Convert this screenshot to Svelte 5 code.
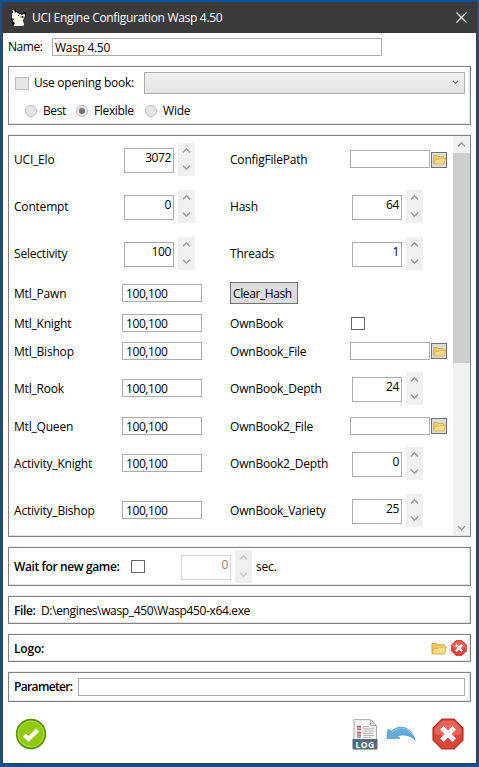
<script>
  const rows = [
    { h: 47, left: ['UCI_Elo', 'spin', '3072'], right: ['ConfigFilePath', 'file'] },
    { h: 47, left: ['Contempt', 'spin', '0'], right: ['Hash', 'spin', '64'] },
    { h: 47, left: ['Selectivity', 'spin', '100'], right: ['Threads', 'spin', '1'] },
    { h: 32, left: ['Mtl_Pawn', 'text', '100,100'], right: ['Clear_Hash', 'button'] },
    { h: 28, left: ['Mtl_Knight', 'text', '100,100'], right: ['OwnBook', 'check'] },
    { h: 28, left: ['Mtl_Bishop', 'text', '100,100'], right: ['OwnBook_File', 'file'] },
    { h: 47, left: ['Mtl_Rook', 'text', '100,100'], right: ['OwnBook_Depth', 'spin', '24'] },
    { h: 28, left: ['Mtl_Queen', 'text', '100,100'], right: ['OwnBook2_File', 'file'] },
    { h: 47, left: ['Activity_Knight', 'text', '100,100'], right: ['OwnBook2_Depth', 'spin', '0'] },
    { h: 47, left: ['Activity_Bishop', 'text', '100,100'], right: ['OwnBook_Variety', 'spin', '25'] }
  ];
</script>

{#snippet folder()}
  <svg class="folder" width="16" height="13" viewBox="0 0 16 13">
    <path d="M1 11.5V1.5h4.5l1 1.3H13v3" fill="#f2cb62" stroke="#d9a440" />
    <path d="M7.5 4h5v2h-5z" fill="#fff3c9" />
    <path d="M1 12 3 6.3h4.3L8.5 5H15.5l-2 7z" fill="#fbdc83" stroke="#dba744" stroke-width=".9" />
  </svg>
{/snippet}

{#snippet stop(size)}
  <svg width={size} height={size} viewBox="0 0 32 32">
    <path d="M10 1.2h12L30.8 10v12L22 30.8H10L1.2 22V10z" fill="#dc4638" stroke="#bd3429" stroke-width="1.6" />
    <path d="M10.6 2.8h10.8l7.8 7.8v5.2c-7 2-19 2-26.4 0v-5.2z" fill="#ed7464" opacity=".65" />
    <path d="m11.500 11.500 9 9m0-9-9 9" stroke="#fff" stroke-width="4.800" stroke-linecap="square" />
  </svg>
{/snippet}

{#snippet spinner(value)}
  <div class="spin">
    <div class="num">{value}</div>
    <div class="arrows">
      <svg width="17" height="33" viewBox="0 0 17 33" fill="none" stroke="#a0a0a0" stroke-width="1.6">
        <path d="m5 9.4 3.5-3.6L12 9.4M5 22.6l3.5 3.6 3.5-3.6" />
      </svg>
    </div>
  </div>
{/snippet}

{#snippet control(kind, value)}
  {#if kind === 'spin'}
    {@render spinner(value)}
  {:else if kind === 'text'}
    <div class="field short">{value}</div>
  {:else if kind === 'file'}
    <div class="field short"></div>
    <div class="browse">{@render folder()}</div>
  {:else if kind === 'check'}
    <div class="check"></div>
  {/if}
{/snippet}

<div class="window">
  <header>
    <svg class="logo" width="16" height="17" viewBox="0 0 16 17">
      <path d="M1 4V2l2-1 1 3 2-1 2 2 3 1 2-1 1 1-1 3-1 2 1 5-1 1H3l1-3-2-2 1-2-2-1z" fill="#fff" />
      <path d="M1 2h1v2H1zm3-2h1v3H4zm2 3h2v1H6zm2 1h2v1H8zm3 0h2v1h-2zm2-1h2v1h-2zm1 1h1v3h-1zM0 8h1v3H0zm1 3h1v1H1zm0 2h2v3H1zm11-2h1v1h-1zM7 6h1v1H7z" fill="#050505" />
      <path d="M9 7h4v2H9z" fill="#b7bd43" /><path d="M11 7h1v2h-1z" fill="#111" />
    </svg>
    <span class="title">UCI Engine Configuration Wasp 4.50</span>
    <svg class="close" width="11" height="11" viewBox="0 0 11 11" stroke="#fff" stroke-width="1.1"><path d="m.5.5 10 10m0-10-10 10" /></svg>
  </header>
  <main>
    <div class="name"><span>Name:</span><div class="field">Wasp 4.50</div></div>

    <section class="book">
      <div class="line">
        <div class="check off"></div>
        <span>Use opening book:</span>
        <div class="combo"><svg width="7" height="5" viewBox="0 0 7 5" fill="none" stroke="#666" stroke-width="1.2"><path d="m1 .8 2.5 2.5L6 .8" /></svg></div>
      </div>
      <div class="radios">
        <label class="best"><i></i>Best</label>
        <label class="flexible"><i class="on"></i>Flexible</label>
        <label class="wide"><i></i>Wide</label>
      </div>
    </section>

    <section class="options">
      <div class="rows">
        {#each rows as row}
          <div class="row" class:tall={row.h === 47} style:height="{row.h}px">
            <span class="lab">{row.left[0]}</span>
            <div class="cell" class:inset={row.left[1] === 'spin'}>{@render control(row.left[1], row.left[2])}</div>
            {#if row.right[1] === 'button'}
              <div class="btn">{row.right[0]}</div>
            {:else}
              <span class="lab">{row.right[0]}</span>
            {/if}
            <div class="cell" class:inset={row.right[1] === 'spin'}>{@render control(row.right[1], row.right[2])}</div>
          </div>
        {/each}
      </div>
      <div class="scroll">
        <svg width="17" height="17" viewBox="0 0 17 17" fill="none" stroke="#999" stroke-width="1.4"><path d="m5 10.5 3.5-3.7 3.5 3.7" /></svg>
        <div class="thumb"></div>
        <svg width="17" height="17" viewBox="0 0 17 17" fill="none" stroke="#999" stroke-width="1.4"><path d="m5 8 3.5 3.7L12 8" /></svg>
      </div>
    </section>

    <section class="wait">
      <b>Wait for new game:</b>
      <div class="check"></div>
      <div class="disabled">{@render spinner('0')}</div>
      <span class="sec">sec.</span>
    </section>

    <section class="file"><b>File:</b><span class="path">D:\engines\wasp_450\Wasp450-x64.exe</span></section>

    <section class="logobar"><b>Logo:</b><div class="tools">{@render folder()}{@render stop(16)}</div></section>

    <section class="param"><b>Parameter:</b><div class="field"></div></section>

    <footer>
      <svg width="32" height="32" viewBox="0 0 32 32">
        <ellipse cx="16" cy="17.5" rx="14.5" ry="14.3" fill="#000" opacity=".16" />
        <circle cx="16" cy="16" r="14.4" fill="#8fca0b" stroke="#569410" stroke-width="1.6" />
        <circle cx="16" cy="16" r="12.9" fill="none" stroke="#b0dd4a" stroke-width="1" />
        <path d="m9.3 17 4.2 4 9.2-9" fill="none" stroke="#fff" stroke-width="4.4" />
      </svg>
      <div class="right">
        <svg class="log" width="26" height="31" viewBox="0 0 26 31">
          <path d="M2 .6h16.500l6 6V21H2z" fill="#f7f7f7" stroke="#aaa" />
          <path d="M18.500.6v6h6z" fill="#ddd" stroke="#aaa" />
          <path d="M5 7.5h4M5 13.5h4" stroke="#e0503e" stroke-width="1.4" />
          <path d="M5 10.5h4M5 16.5h4" stroke="#e66e55" stroke-width="1.4" />
          <path d="M5 9h4M5 15h4M5 18h4" stroke="#4296d5" stroke-width="1.2" />
          <path d="M11 7.5h6m-6 1.8h11m-11 1.8h10m-10 1.8h11m-11 1.8h10m-10 1.8h11m-11 1.8h9" stroke="#b6b6b6" stroke-width=".9" />
          <path d="M.5 20h25v9.500q0 1-1 1h-23q-1 0-1-1z" fill="#576a7d" />
          <text x="13" y="28.7" text-anchor="middle" fill="#fff">LOG</text>
        </svg>
        <svg class="undo" width="30" height="17" viewBox="0 0 30 17">
          <path d="M1 12.500 2 3.200 5.200 5.300C12-1.500 25-.8 29 14.200 24 8.500 16.500 8 10.800 9.900L14 12.200Z" fill="#68abd8" stroke="#4a93c6" stroke-width=".8" stroke-linejoin="round" />
          <path d="M6 6.200C12.500.3 21.500 1 26 8" fill="none" stroke="#91c8e8" stroke-width="1.1" />
        </svg>
        {@render stop(32)}
      </div>
    </footer>
  </main>
</div>

<style>
  :global(body) { background: #fff; }
  .window {
    box-sizing: border-box; width: 479px; height: 767px; background: #fff;
    border: 2px solid #00559b; border-bottom-width: 3px;
    font: 12px/16px "Open Sans", "Noto Sans", sans-serif; color: #000; letter-spacing: -0.2px; white-space: nowrap;
  }
  .window *, .window { box-sizing: border-box; }
  svg { display: block; flex: none; }
  header { height: 31px; background: #3b3b3b; color: #fff; display: flex; align-items: center; padding: 0 10px 0 9px; }
  .logo { margin-top: -1px; }
  .title { margin-left: 5px; letter-spacing: -0.31px; }
  .close { margin-left: auto; }
  main { height: 731px; border: solid #3b3b3b; border-width: 0 1px 1px; padding: 5px 4px 0 5px; display: flex; flex-direction: column; }
  .field { height: 18px; border: 1px solid #abadb3; background: #fff; padding-left: 3px; line-height: 17px; letter-spacing: -0.42px; }
  .name { display: flex; height: 18px; line-height: 17px; }
  .name span { width: 44px; letter-spacing: -0.45px; }
  .name .field { width: 330px; padding-left: 2px; letter-spacing: -0.3px; }
  section { flex: none; width: 463px; border: 1px solid #828282; box-shadow: inset -1px -1px #e3e3e3, 0 -1px #efefef; }
  .check { width: 14px; height: 13px; border: 1px solid #666; background: #fff; flex: none; }
  .check.off { border-color: #bcbcbc; background: #e6e6e6; }
  .book { height: 59px; margin-top: 10px; padding: 5px 5px 0 6px; }
  .line { display: flex; align-items: center; height: 22px; }
  .line span { margin-left: 5px; width: 110px; flex: none; letter-spacing: -0.25px; }
  .combo { flex: 1; height: 22px; border: 1px solid #acacac; background: linear-gradient(#f0f0f0, #e4e4e4); display: flex; justify-content: flex-end; align-items: center; padding-right: 5px; }
  .combo svg { margin-top: -2px; }
  .radios { display: flex; margin: 10px 0 0 10px; height: 16px; line-height: 18px; }
  .radios label { display: flex; align-items: center; height: 14px; }
  .radios i { width: 12px; height: 12px; border: 1px solid #bcbcbc; border-radius: 50%; background: #e6e6e6; margin-right: 6px; display: flex; align-items: center; justify-content: center; }
  .radios .on::after { content: ''; width: 6px; height: 6px; border-radius: 50%; background: #707070; }
  .best { width: 51px; letter-spacing: -0.4px; }
  .flexible { width: 69px; letter-spacing: -0.35px; }
  .options { height: 402px; margin-top: 10px; display: flex; }
  .rows { width: 444px; padding-left: 5px; }
  .row { display: grid; grid-template-columns: 108px 108px 120px 103px; align-items: center; }
  .lab { padding-top: 1px; }
  .cell { display: flex; align-items: center; }
  .cell .check { margin-left: 1px; }
  .inset { padding-left: 2px; }
  .short { width: 80px; flex: none; }
  .tall .short { margin-top: -1px; }
  .spin { display: flex; align-items: center; }
  .num { width: 50px; height: 25px; border: 1px solid #abadb3; text-align: right; padding-right: 2px; line-height: 18px; margin-top: 2px; letter-spacing: -0.4px; }
  .arrows { width: 17px; height: 33px; background: #f0f0f0; margin-left: 4px; }
  .browse { width: 16px; height: 16px; background: #ddd; border: 1px solid #707070; margin-left: 1px; display: flex; align-items: center; justify-content: center; }
  .browse .folder { width: 13px; height: 11px; }
  .btn { width: 68px; height: 22px; border: 1px solid #707070; background: #ddd; padding-left: 2px; line-height: 21px; letter-spacing: -0.4px; }
  .scroll { width: 17px; height: 399px; background: #f0f0f0; display: flex; flex-direction: column; }
  .thumb { height: 210px; background: #cdcdcd; margin-bottom: auto; }
  b { font-weight: 600; letter-spacing: -0.38px; flex: none; }
  .wait { height: 39px; margin-top: 10px; padding-left: 5px; display: flex; align-items: center; }
  .wait b { width: 117px; }
  .disabled { margin-left: 36px; }
  .disabled .num { border-color: #d5d6d9; color: #868686; }
  .disabled svg { opacity: .45; }
  .sec { margin-left: 4px; }
  .file, .logobar { height: 28px; margin-top: 10px; padding-left: 5px; display: flex; align-items: center; }
  .file b { width: 27px; }
  .file b, .path { padding-top: 2px; }
  .path { letter-spacing: -0.36px; }
  .logobar { justify-content: space-between; padding-right: 3px; }
  .logobar b { margin-top: 2px; letter-spacing: -0.2px; }
  .tools { display: flex; align-items: center; gap: 4px; }
  .param { height: 30px; margin-top: 10px; padding: 0 5px; display: flex; align-items: center; }
  .param b { width: 64px; letter-spacing: -0.65px; }
  .param .field { flex: 1; }
  footer { display: flex; justify-content: space-between; align-items: center; height: 34px; margin-top: 15px; padding: 0 8px 0 7px; }
  .right { display: flex; align-items: center; }
  .log text { font: 700 8.5px "Open Sans", sans-serif; letter-spacing: .4px; }
  .undo { margin: 0 16px 0 8px; }
</style>
